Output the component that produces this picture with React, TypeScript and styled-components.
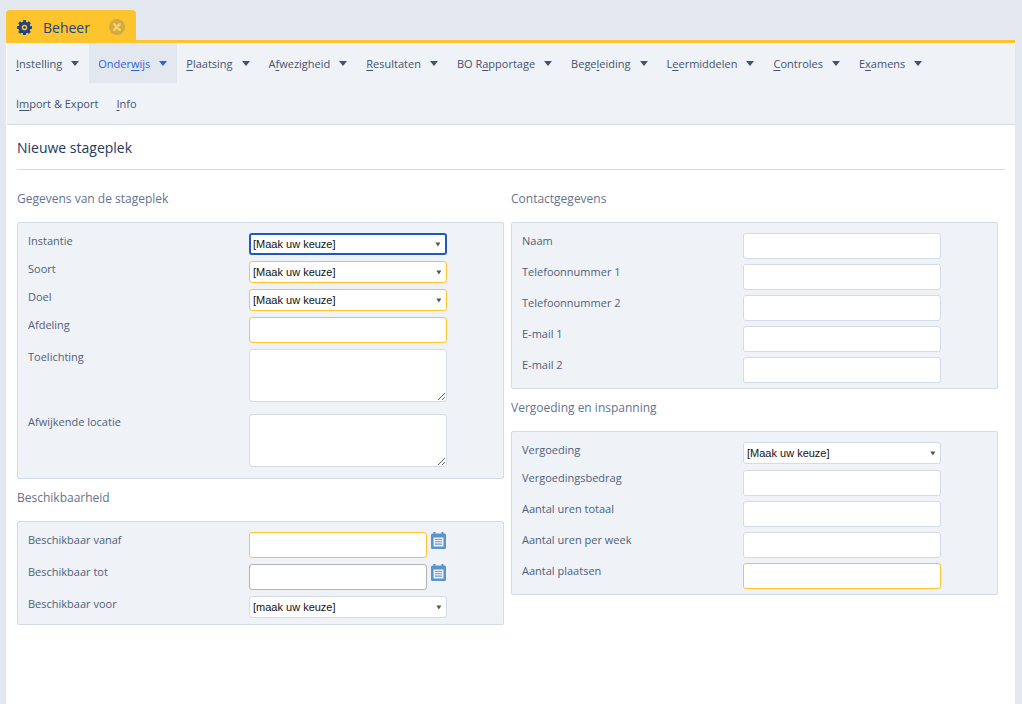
import React from 'react';
import styled, { createGlobalStyle } from 'styled-components';

const Global = createGlobalStyle`
  html, body { margin: 0; padding: 0; height: 100%; overflow: hidden; background: #e3e7ef; }
  body { font-family: "Open Sans", "Noto Sans", sans-serif; font-size: 11px; color: #4a5a78; }
  * { box-sizing: border-box; }
`;

const Page = styled.div`
  width: 1022px;
  height: 704px;
  padding: 10px 7px 0 6px;
  display: flex;
  flex-direction: column;
`;

const TabBar = styled.div`
  display: flex;
  height: 30px;
`;

const Tab = styled.div`
  width: 130px;
  height: 30px;
  background: #fec42d;
  border-radius: 4px 4px 0 0;
  display: flex;
  align-items: center;
  padding: 4px 0 0 11px;
`;

const TabTitle = styled.span`
  font-size: 14px;
  color: #1d4289;
  margin-left: 11px;
  width: 66px;
`;

const Window = styled.div`
  flex: 1;
  border-top: 3px solid #fec42d;
  background: #fff;
  display: flex;
  flex-direction: column;
  min-height: 0;
`;

const Inner = styled.div`
  margin-left: 1px;
  flex: 1;
  display: flex;
  flex-direction: column;
  background: #fff;
`;

const MenuBar = styled.nav`
  background: #eff2f6;
  border-bottom: 1px solid #d3dbe6;
  height: 82px;
  display: flex;
  flex-wrap: wrap;
  align-content: flex-start;
`;

const MenuItem = styled.div<{ $active?: boolean }>`
  height: 40px;
  padding: 0 9px;
  display: flex;
  align-items: center;
  font-size: 11px;
  color: ${p => (p.$active ? '#2f62dc' : '#44536f')};
  background: ${p => (p.$active ? '#e3e7ef' : 'transparent')};
  white-space: pre;
  u { text-underline-offset: 2px; text-decoration-thickness: 1px; }
`;

const Caret = styled.span`
  width: 0;
  height: 0;
  margin: 1px 1px 0 9px;
  border-left: 4.5px solid transparent;
  border-right: 4.5px solid transparent;
  border-top: 5px solid currentColor;
`;

const Content = styled.main`
  padding: 0 10px;
`;

const Title = styled.h1`
  margin: 0;
  height: 45px;
  border-bottom: 1px solid #d3dbe6;
  padding-top: 12px;
  font-size: 14px;
  line-height: 22px;
  font-weight: 500;
  color: #243a5a;
`;

const Columns = styled.div`
  display: grid;
  grid-template-columns: 487px 487px;
  column-gap: 7px;
`;

const Column = styled.section``;

const Heading = styled.h2<{ $first?: boolean }>`
  margin: 0;
  height: ${p => (p.$first ? 52 : 42)}px;
  padding-top: ${p => (p.$first ? 19 : 9)}px;
  font-size: 12px;
  line-height: 20px;
  font-weight: 400;
  color: #64738d;
`;

const Panel = styled.div<{ $height: number }>`
  background: #eff2f6;
  border: 1px solid #d3dbe6;
  border-radius: 2px;
  padding: 10px 10px 0;
  height: ${p => p.$height}px;
`;

const Row = styled.div<{ $gap?: number }>`
  display: grid;
  grid-template-columns: 221px 1fr;
  margin-bottom: ${p => p.$gap ?? 6}px;
  align-items: start;
`;

const Label = styled.label`
  font-size: 11px;
  line-height: 16px;
  color: #4f5f7c;
`;

const Controls = styled.div`
  display: flex;
  align-items: flex-start;
`;

const Select = styled.select<{ $state?: 'focus' | 'required' }>`
  appearance: none;
  width: 198px;
  height: 22px;
  padding: 0 14px 1px 3px;
  font-family: "Liberation Sans", Arial, sans-serif;
  font-size: 11px;
  color: #111;
  border-radius: 3px;
  outline: none;
  border: ${p => (p.$state === 'focus' ? '2px solid #1f57c3' : p.$state === 'required' ? '1px solid #fec42d' : '1px solid #d3dbe6')};
  padding-left: ${p => (p.$state === 'focus' ? 2 : 3)}px;
  background: #fff url("data:image/svg+xml,%3Csvg xmlns='http://www.w3.org/2000/svg' width='6' height='5'%3E%3Cpath d='M0.4 0.6h5L2.9 4.4z' fill='%23555'/%3E%3C/svg%3E") no-repeat right 4px center;
`;

const Input = styled.input<{ $state?: 'required' | 'grey'; $short?: boolean }>`
  display: block;
  width: ${p => (p.$short ? 178 : 198)}px;
  height: 26px;
  background: #fff;
  border-radius: 3px;
  outline: none;
  border: 1px solid ${p => (p.$state === 'required' ? '#fec42d' : p.$state === 'grey' ? '#b3b3b3' : '#d3dbe6')};
`;

const TextArea = styled.textarea`
  display: block;
  width: 198px;
  height: 53px;
  background: #fff;
  border-radius: 3px;
  outline: none;
  border: 1px solid #d3dbe6;
  resize: vertical;
`;

const CalendarButton = styled.span`
  margin-left: 4px;
  width: 15px;
  height: 17px;
  display: block;
`;

const GearIcon = () => (
  <svg width="15" height="15" viewBox="0 0 16 16" aria-hidden="true">
    <path
      fill="#1d4289"
      fillRule="evenodd"
      d="M6.6 0h2.8l.4 2.1c.4.1.8.3 1.1.5l1.8-1.2 2 2-1.2 1.8c.2.3.4.7.5 1.1l2 .3v2.8l-2 .4c-.1.4-.3.8-.5 1.1l1.2 1.8-2 2-1.8-1.2c-.3.2-.7.4-1.1.5L9.4 16H6.6l-.4-2c-.4-.1-.8-.3-1.1-.5l-1.8 1.2-2-2 1.2-1.8c-.2-.3-.4-.7-.5-1.1L0 9.4V6.6l2-.3c.1-.4.3-.8.5-1.1L1.3 3.4l2-2 1.8 1.2c.3-.2.7-.4 1.1-.5zM8 5a3 3 0 1 0 0 6 3 3 0 0 0 0-6z"
    />
    <circle cx="8" cy="8" r="1.4" fill="#1d4289" />
  </svg>
);

const CloseIcon = () => (
  <svg width="16" height="16" viewBox="0 0 16 16" aria-hidden="true">
    <circle cx="8" cy="8" r="8" fill="#d2ab45" />
    <path d="M5.2 5.2l5.6 5.6M10.8 5.2l-5.6 5.6" stroke="#fbd466" strokeWidth="2.4" strokeLinecap="round" />
  </svg>
);

const CalendarIcon = () => (
  <svg width="15" height="17" viewBox="0 0 15 17" aria-hidden="true">
    <rect x="0" y="1.5" width="15" height="15.5" rx="1.5" fill="#5b93cf" />
    <rect x="2.5" y="0" width="2" height="3" fill="#5b93cf" />
    <rect x="10.5" y="0" width="2" height="3" fill="#5b93cf" />
    <rect x="2.5" y="5.5" width="10" height="9" fill="#eaf1f9" />
    <path d="M4 7.5h7M4 9.8h7M4 12.1h7" stroke="#6f9fd4" strokeWidth="1.1" />
  </svg>
);

const menuRows: { pre: string; key: string; post: string; caret: boolean; active?: boolean }[] = [
  { pre: '', key: 'I', post: 'nstelling', caret: true },
  { pre: 'Onder', key: 'w', post: 'ijs', caret: true, active: true },
  { pre: '', key: 'P', post: 'laatsing', caret: true },
  { pre: 'A', key: 'f', post: 'wezigheid', caret: true },
  { pre: '', key: 'R', post: 'esultaten', caret: true },
  { pre: 'BO R', key: 'a', post: 'pportage', caret: true },
  { pre: 'Bege', key: 'l', post: 'eiding', caret: true },
  { pre: 'L', key: 'e', post: 'ermiddelen', caret: true },
  { pre: '', key: 'C', post: 'ontroles', caret: true },
  { pre: 'E', key: 'x', post: 'amens', caret: true },
  { pre: 'I', key: 'm', post: 'port & Export', caret: false },
  { pre: '', key: 'I', post: 'nfo', caret: false },
];

export default function App() {
  return (
    <Page>
      <Global />
      <TabBar>
        <Tab>
          <GearIcon />
          <TabTitle>Beheer</TabTitle>
          <CloseIcon />
        </Tab>
      </TabBar>
      <Window>
        <Inner>
          <MenuBar>
            {menuRows.map(m => (
              <MenuItem key={m.pre + m.key + m.post} $active={m.active}>
                <span>
                  {m.pre}
                  <u>{m.key}</u>
                  {m.post}
                </span>
                {m.caret && <Caret />}
              </MenuItem>
            ))}
          </MenuBar>
          <Content>
            <Title>Nieuwe stageplek</Title>
            <Columns>
              <Column>
                <Heading $first>Gegevens van de stageplek</Heading>
                <Panel $height={257}>
                  <Row><Label>Instantie</Label><Select $state="focus" defaultValue="a"><option value="a">[Maak uw keuze]</option></Select></Row>
                  <Row><Label>Soort</Label><Select $state="required" defaultValue="a"><option value="a">[Maak uw keuze]</option></Select></Row>
                  <Row><Label>Doel</Label><Select $state="required" defaultValue="a"><option value="a">[Maak uw keuze]</option></Select></Row>
                  <Row><Label>Afdeling</Label><Input $state="required" /></Row>
                  <Row $gap={12}><Label>Toelichting</Label><TextArea /></Row>
                  <Row><Label>Afwijkende locatie</Label><TextArea /></Row>
                </Panel>
                <Heading>Beschikbaarheid</Heading>
                <Panel $height={104}>
                  <Row>
                    <Label>Beschikbaar vanaf</Label>
                    <Controls><Input $short $state="required" /><CalendarButton><CalendarIcon /></CalendarButton></Controls>
                  </Row>
                  <Row>
                    <Label>Beschikbaar tot</Label>
                    <Controls><Input $short $state="grey" /><CalendarButton><CalendarIcon /></CalendarButton></Controls>
                  </Row>
                  <Row><Label>Beschikbaar voor</Label><Select defaultValue="a"><option value="a">[maak uw keuze]</option></Select></Row>
                </Panel>
              </Column>
              <Column>
                <Heading $first>Contactgegevens</Heading>
                <Panel $height={167}>
                  {['Naam', 'Telefoonnummer 1', 'Telefoonnummer 2', 'E-mail 1', 'E-mail 2'].map(l => (
                    <Row key={l} $gap={5}><Label>{l}</Label><Input /></Row>
                  ))}
                </Panel>
                <Heading>Vergoeding en inspanning</Heading>
                <Panel $height={164}>
                  <Row><Label>Vergoeding</Label><Select defaultValue="a"><option value="a">[Maak uw keuze]</option></Select></Row>
                  <Row $gap={5}><Label>Vergoedingsbedrag</Label><Input /></Row>
                  <Row $gap={5}><Label>Aantal uren totaal</Label><Input /></Row>
                  <Row $gap={5}><Label>Aantal uren per week</Label><Input /></Row>
                  <Row $gap={5}><Label>Aantal plaatsen</Label><Input $state="required" /></Row>
                </Panel>
              </Column>
            </Columns>
          </Content>
        </Inner>
      </Window>
    </Page>
  );
}
